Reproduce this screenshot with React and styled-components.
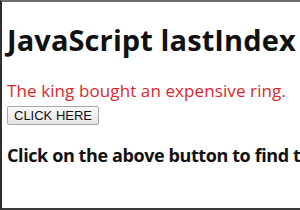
import React from 'react';
import styled, { createGlobalStyle } from 'styled-components';

const GlobalStyle = createGlobalStyle`
  html, body {
    margin: 0;
    padding: 0;
    background: #fff;
    overflow: hidden;
  }
`;

const Frame = styled.div`
  box-sizing: border-box;
  width: 300px;
  height: 210px;
  border-top: 2px solid #6e6e6e;
  border-left: 2px solid #2e2e2e;
  border-bottom: 2px solid #3a3a3a;
  padding: 0 0 0 5px;
  overflow: hidden;
  white-space: nowrap;
  font-family: 'Open Sans', 'Noto Sans', sans-serif;
  color: #111;
`;

const Heading = styled.h1`
  margin: 19px 0 0;
  font-size: 29px;
  line-height: 38px;
  font-weight: 700;
  letter-spacing: 0.1px;
`;

const Sentence = styled.p`
  margin: 21px 0 0;
  font-size: 17px;
  line-height: 22px;
  color: #e0262c;
  letter-spacing: 0.1px;
`;

const Button = styled.button`
  display: block;
  margin: 4px 0 0;
  height: 19px;
  padding: 0 6px;
  font-family: 'Liberation Sans', Arial, sans-serif;
  font-size: 13px;
  color: #111;
  background: linear-gradient(#fafafa, #e4e4e4);
  border: 1px solid #a8a8a8;
  border-radius: 2px;
`;

const Note = styled.p`
  margin: 19px 0 0;
  font-size: 18px;
  line-height: 22px;
  font-weight: 700;
  letter-spacing: -0.4px;
`;

export default function App() {
  return (
    <>
      <GlobalStyle />
      <Frame>
        <Heading>JavaScript lastIndex</Heading>
        <Sentence>The king bought an expensive ring.</Sentence>
        <Button>CLICK HERE</Button>
        <Note>Click on the above button to find the last index</Note>
      </Frame>
    </>
  );
}
